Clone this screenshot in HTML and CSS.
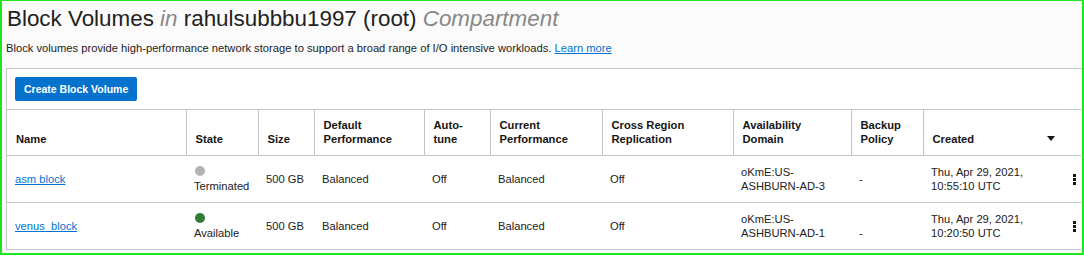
FILE: index.html
```html
<!doctype html>
<html lang="en">
<head>
  <meta charset="utf-8">
  <title>Block Volumes</title>
  <link rel="stylesheet" href="styles.css">
</head>
<body>
<div class="frame">
  <h1 class="title">Block Volumes <em>in</em> rahulsubbbu1997 (root) <em>Compartment</em></h1>
  <p class="intro">Block volumes provide high-performance network storage to support a broad range of I/O intensive workloads. <a href="#">Learn more</a></p>

  <div class="panel">
    <div class="toolbar">
      <button class="btn-primary">Create Block Volume</button>
    </div>
    <table class="grid">
      <colgroup>
        <col class="c-name"><col class="c-state"><col class="c-size"><col class="c-perf">
        <col class="c-auto"><col class="c-cur"><col class="c-cross"><col class="c-ad">
        <col class="c-backup"><col class="c-created">
      </colgroup>
      <thead>
        <tr>
          <th>Name</th>
          <th>State</th>
          <th>Size</th>
          <th>Default<br>Performance</th>
          <th>Auto-<br>tune</th>
          <th>Current<br>Performance</th>
          <th>Cross Region<br>Replication</th>
          <th>Availability<br>Domain</th>
          <th>Backup<br>Policy</th>
          <th class="sortable">Created <span class="caret"></span></th>
        </tr>
      </thead>
      <tbody>
        <tr>
          <td><a href="#">asm block</a></td>
          <td><span class="dot dot-gray"></span><br>Terminated</td>
          <td>500 GB</td>
          <td>Balanced</td>
          <td>Off</td>
          <td>Balanced</td>
          <td>Off</td>
          <td>oKmE:US-<br>ASHBURN-AD-3</td>
          <td>-</td>
          <td class="created">Thu, Apr 29, 2021,<br>10:55:10 UTC <span class="kebab"><i></i><i></i><i></i></span></td>
        </tr>
        <tr>
          <td><a href="#">venus_block</a></td>
          <td><span class="dot dot-green"></span><br>Available</td>
          <td>500 GB</td>
          <td>Balanced</td>
          <td>Off</td>
          <td>Balanced</td>
          <td>Off</td>
          <td>oKmE:US-<br>ASHBURN-AD-1</td>
          <td><br>-</td>
          <td class="created">Thu, Apr 29, 2021,<br>10:20:50 UTC <span class="kebab"><i></i><i></i><i></i></span></td>
        </tr>
      </tbody>
    </table>
  </div>
</div>
</body>
</html>
```

FILE: styles.css
```css
body {
  margin: 0;
  font-family: "Liberation Sans", Arial, sans-serif;
  color: #222;
  background: #fff;
}

.frame {
  box-sizing: border-box;
  width: 1084px;
  height: 255px;
  overflow: hidden;
  border: 2px solid #1ee61e;
  border-top-width: 1px;
  background: #fbfbfb;
  padding: 0 0 0 4px;
}

.title {
  margin: 0;
  padding: 5px 0 0 1px;
  font-size: 22.4px;
  line-height: 26px;
  font-weight: normal;
  color: #222;
}
.title em {
  color: #888;
}

.intro {
  margin: 9px 0 0 0;
  font-size: 11.2px;
  line-height: 14px;
  color: #222;
}
.intro a,
.grid a {
  color: #0572ce;
}

.panel {
  margin-top: 13px;
  margin-right: 0;
  width: 1076px;
  background: #fff;
  border: 1px solid #c1c4c9;
  border-bottom: 0;
}

.toolbar {
  padding: 8px 8px;
}

.btn-primary {
  display: block;
  height: 24px;
  padding: 0 9px;
  border: 0;
  border-radius: 2px;
  background: #0572ce;
  color: #fff;
  font-family: inherit;
  font-size: 10.5px;
  font-weight: bold;
}

.grid {
  width: 1074px;
  table-layout: fixed;
  border-collapse: collapse;
  font-size: 11.2px;
  line-height: 14px;
}
.c-name { width: 179px; }
.c-state { width: 72px; }
.c-size { width: 56px; }
.c-perf { width: 110px; }
.c-auto { width: 66px; }
.c-cur { width: 112px; }
.c-cross { width: 131px; }
.c-ad { width: 118px; }
.c-backup { width: 72px; }
.c-created { width: 158px; }

.grid th {
  height: 36px;
  padding: 0 8px 9px 9px;
  text-align: left;
  vertical-align: bottom;
  font-weight: bold;
  color: #161513;
  border-top: 1px solid #c1c4c9;
  border-bottom: 1px solid #c1c4c9;
  border-right: 1px solid #c1c4c9;
}
.grid th:last-child {
  border-right: 0;
}
.sortable {
  position: relative;
}
.caret {
  position: absolute;
  right: 26px;
  bottom: 14px;
  border-left: 4px solid transparent;
  border-right: 4px solid transparent;
  border-top: 5px solid #161513;
}

.grid td {
  height: 46px;
  padding: 0 8px;
  vertical-align: middle;
  border-bottom: 1px solid #c1c4c9;
  color: #222;
}
.created {
  position: relative;
}

.dot {
  display: inline-block;
  width: 10px;
  height: 10px;
  border-radius: 50%;
  margin-left: 1px;
}
.dot-gray { background: #b3b3b3; }
.dot-green { background: #2f7d32; }

.kebab {
  position: absolute;
  right: 5px;
  top: 18px;
  display: flex;
  flex-direction: column;
  gap: 1px;
}
.kebab i {
  display: block;
  width: 3px;
  height: 3px;
  background: #161513;
}
```
